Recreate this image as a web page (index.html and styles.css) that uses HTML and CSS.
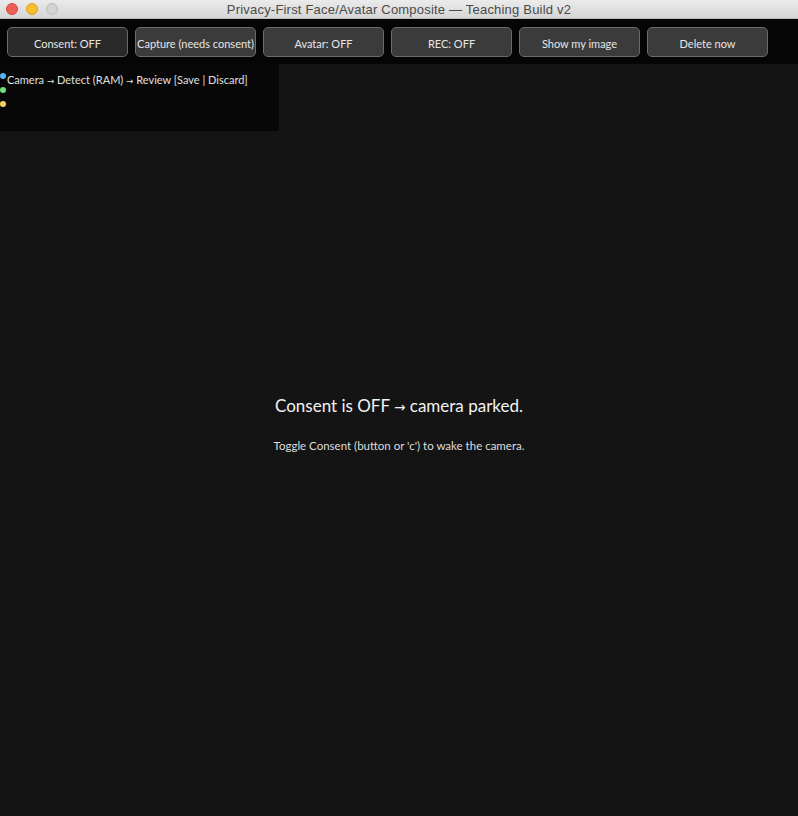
FILE: index.html
```html
<!DOCTYPE html>
<html lang="en">
<head>
<meta charset="utf-8">
<title>Privacy-First Face/Avatar Composite — Teaching Build v2</title>
<link rel="stylesheet" href="styles.css">
</head>
<body>
<div class="window">
  <header class="titlebar">
    <div class="lights">
      <span class="light close"></span>
      <span class="light min"></span>
      <span class="light max"></span>
    </div>
    <div class="title">Privacy-First Face/Avatar Composite — Teaching Build v2</div>
  </header>
  <nav class="toolbar">
    <button class="btn btn-active">Consent: OFF</button>
    <button class="btn">Capture (needs consent)</button>
    <button class="btn">Avatar: OFF</button>
    <button class="btn">REC: OFF</button>
    <button class="btn">Show my image</button>
    <button class="btn">Delete now</button>
  </nav>
  <main class="stage">
    <section class="pipeline">
      <div class="row"><span class="dot blue"></span><span class="label">Camera <span class="arrow">→</span> Detect (RAM) <span class="arrow">→</span> Review [Save | Discard]</span></div>
      <div class="row"><span class="dot green"></span></div>
      <div class="row"><span class="dot yellow"></span></div>
    </section>
    <section class="message">
      <p class="headline">Consent is OFF <span class="arrow">→</span> camera parked.</p>
      <p class="hint">Toggle Consent (button or 'c') to wake the camera.</p>
    </section>
  </main>
</div>
</body>
</html>
```
FILE: styles.css
```css
* { box-sizing: border-box; }

html, body {
  margin: 0;
  padding: 0;
  width: 798px;
  height: 816px;
  overflow: hidden;
  background: #141414;
  font-family: Lato, "Open Sans", sans-serif;
}

.window {
  display: flex;
  flex-direction: column;
  height: 816px;
}

/* title bar */
.titlebar {
  position: relative;
  height: 19px;
  background: linear-gradient(#ebebeb, #d6d6d6);
  border-bottom: 1px solid #b9b9b9;
  display: flex;
  align-items: center;
  justify-content: center;
}

.lights {
  position: absolute;
  left: 6px;
  top: 3px;
  display: flex;
  gap: 8px;
}

.light {
  width: 12px;
  height: 12px;
  border-radius: 50%;
}
.light.close { background: #ed5f57; border: 1px solid #d8473f; }
.light.min { background: #f5bf2f; border: 1px solid #d9a120; }
.light.max { background: #d3d3d3; border: 1px solid #bdbdbd; }

.title {
  font-family: "Liberation Sans", Arial, sans-serif;
  font-size: 13px;
  color: #4a4a4a;
  letter-spacing: 0.2px;
}

/* toolbar */
.toolbar {
  height: 45px;
  background: #050505;
  display: flex;
  gap: 7px;
  padding: 8px 0 0 7px;
}

.btn {
  width: 121px;
  height: 30px;
  border: 1px solid #6b6b6b;
  border-radius: 5px;
  background: #3b3b3b;
  color: #e6e6e6;
  font-family: Lato, "Open Sans", sans-serif;
  font-size: 11px;
  padding: 2px 0 0;
  white-space: nowrap;
  display: flex;
  justify-content: center;
  align-items: center;
}
.btn-active { background: #2a2a2a; }

/* stage */
.stage {
  flex: 1;
  position: relative;
  background: #141414;
}

.pipeline {
  width: 279px;
  height: 67px;
  background: #070707;
  padding-top: 7px;
}

.row {
  display: flex;
  align-items: flex-start;
  height: 14px;
}

.dot {
  width: 6px;
  height: 6px;
  border-radius: 50%;
  margin: 2px 1px 0 0;
  flex: none;
}
.dot.blue { background: #4fb8f0; }
.dot.green { background: #6fe07a; }
.dot.yellow { background: #f4d35e; }

.label {
  font-size: 11px;
  color: #e0e0e0;
  line-height: 19px;
  margin-top: -1px;
}

.arrow {
  font-family: "DejaVu Sans", sans-serif;
  font-size: 0.8em;
}

.message {
  text-align: center;
  color: #f0f0f0;
  margin-top: 263px;
}

.headline {
  margin: 0;
  font-size: 17px;
  line-height: 24px;
  color: #f2f2f2;
}

.hint {
  margin: 19px 0 0;
  font-size: 11.5px;
  line-height: 16px;
  color: #dedede;
}
```
